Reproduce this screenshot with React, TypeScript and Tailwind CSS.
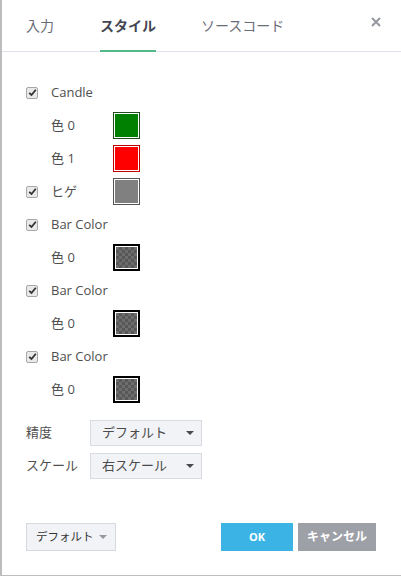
import React from "react";

type Row = {
  kind: "check" | "color";
  label: string;
  color?: string;
  border?: string;
  checker?: boolean;
};

const rows: Row[] = [
  { kind: "check", label: "Candle" },
  { kind: "color", label: "色 0", color: "bg-[#008000]", border: "border-[#1f4f1f]" },
  { kind: "color", label: "色 1", color: "bg-[#ff0000]", border: "border-[#c00000]" },
  { kind: "check", label: "ヒゲ", color: "bg-[#808080]", border: "border-[#555555]" },
  { kind: "check", label: "Bar Color" },
  { kind: "color", label: "色 0", checker: true },
  { kind: "check", label: "Bar Color" },
  { kind: "color", label: "色 0", checker: true },
  { kind: "check", label: "Bar Color" },
  { kind: "color", label: "色 0", checker: true },
];

function Checkbox() {
  return (
    <div className="flex h-[12px] w-[12px] items-center justify-center rounded-[2px] border border-[#a9a9a9] bg-[#e9e9e9]">
      <svg width="9" height="9" viewBox="0 0 9 9">
        <path d="M1.2 4.8 L3.5 7 L7.8 1.8" fill="none" stroke="#333" strokeWidth="1.8" />
      </svg>
    </div>
  );
}

function Swatch({ color, border, checker }: { color?: string; border?: string; checker?: boolean }) {
  if (checker) {
    return (
      <div className="h-[27px] w-[27px] border-2 border-black bg-white p-px">
        <div className="h-full w-full bg-[conic-gradient(#575757_25%,#6d6d6d_0_50%,#575757_0_75%,#6d6d6d_0)] bg-[length:6px_6px]" />
      </div>
    );
  }
  return (
    <div className={`h-[27px] w-[27px] border bg-white p-px ${border}`}>
      <div className={`h-full w-full ${color}`} />
    </div>
  );
}

function Caret({ color = "#4a4a4a" }: { color?: string }) {
  return (
    <svg width="8" height="4" viewBox="0 0 8 4">
      <path d="M0 0 H8 L4 4 Z" fill={color} />
    </svg>
  );
}

function Select({ value }: { value: string }) {
  return (
    <div className="flex h-[26px] w-[112px] items-center justify-between border border-[#d8dbe2] bg-[#f1f3f7] pl-[11px] pr-[7px] text-[13px] text-[#4a4a4a]">
      <span>{value}</span>
      <Caret />
    </div>
  );
}

export default function App() {
  return (
    <div
      className="h-[578px] w-[401px] bg-white"
      style={{ fontFamily: '"Open Sans", "Noto Sans CJK JP", sans-serif' }}
    >
      <div className="flex h-[576px] flex-col border-b border-l-2 border-[#bdbdbd]">
        {/* tabs */}
        <div className="relative flex h-[52px] items-stretch border-b border-[#e0e3eb] pl-[24px]">
          <div className="flex items-center text-[14px] text-[#6a6d78]">入力</div>
          <div className="mb-[-1px] ml-[46px] flex items-center border-b-2 border-[#53b987] text-[14px] font-bold text-[#434651]">
            スタイル
          </div>
          <div className="ml-[45px] flex items-center text-[14px] text-[#6a6d78]">ソースコード</div>
          <button className="absolute right-[20px] top-[17px]">
            <svg width="10" height="10" viewBox="0 0 10 10">
              <path d="M1 1 L9 9 M9 1 L1 9" stroke="#9598a1" strokeWidth="2" />
            </svg>
          </button>
        </div>

        {/* body */}
        <div className="flex flex-col pl-[24px] pt-[24px] text-[13px] text-[#4f4f4f]">
          {rows.map((r, i) => (
            <div key={i} className="flex h-[33px] items-center">
              <div className="w-[25px]">{r.kind === "check" && <Checkbox />}</div>
              <div className="w-[62px] whitespace-nowrap">{r.label}</div>
              {(r.color || r.checker) && (
                <Swatch color={r.color} border={r.border} checker={r.checker} />
              )}
            </div>
          ))}
          <div className="mt-[10px] flex h-[33px] items-center">
            <div className="w-[64px]">精度</div>
            <Select value="デフォルト" />
          </div>
          <div className="flex h-[33px] items-center">
            <div className="w-[64px]">スケール</div>
            <Select value="右スケール" />
          </div>
        </div>

        {/* footer */}
        <div className="mt-auto flex items-center justify-between pb-[24px] pl-[24px] pr-[25px]">
          <div className="flex h-[28px] w-[90px] items-center justify-between border border-[#d6d9df] bg-[#f1f3f7] pl-[9px] pr-[8px] text-[11.5px] text-[#333]">
            <span>デフォルト</span>
            <Caret color="#9598a1" />
          </div>
          <div className="flex gap-[5px]">
            <button className="flex h-[28px] w-[72px] items-center justify-center bg-[#3bb3e4] text-[11px] font-bold text-white">
              OK
            </button>
            <button className="flex h-[28px] w-[78px] items-center justify-center bg-[#9ea0a8] text-[12px] font-bold text-white">
              キャンセル
            </button>
          </div>
        </div>
      </div>
    </div>
  );
}
